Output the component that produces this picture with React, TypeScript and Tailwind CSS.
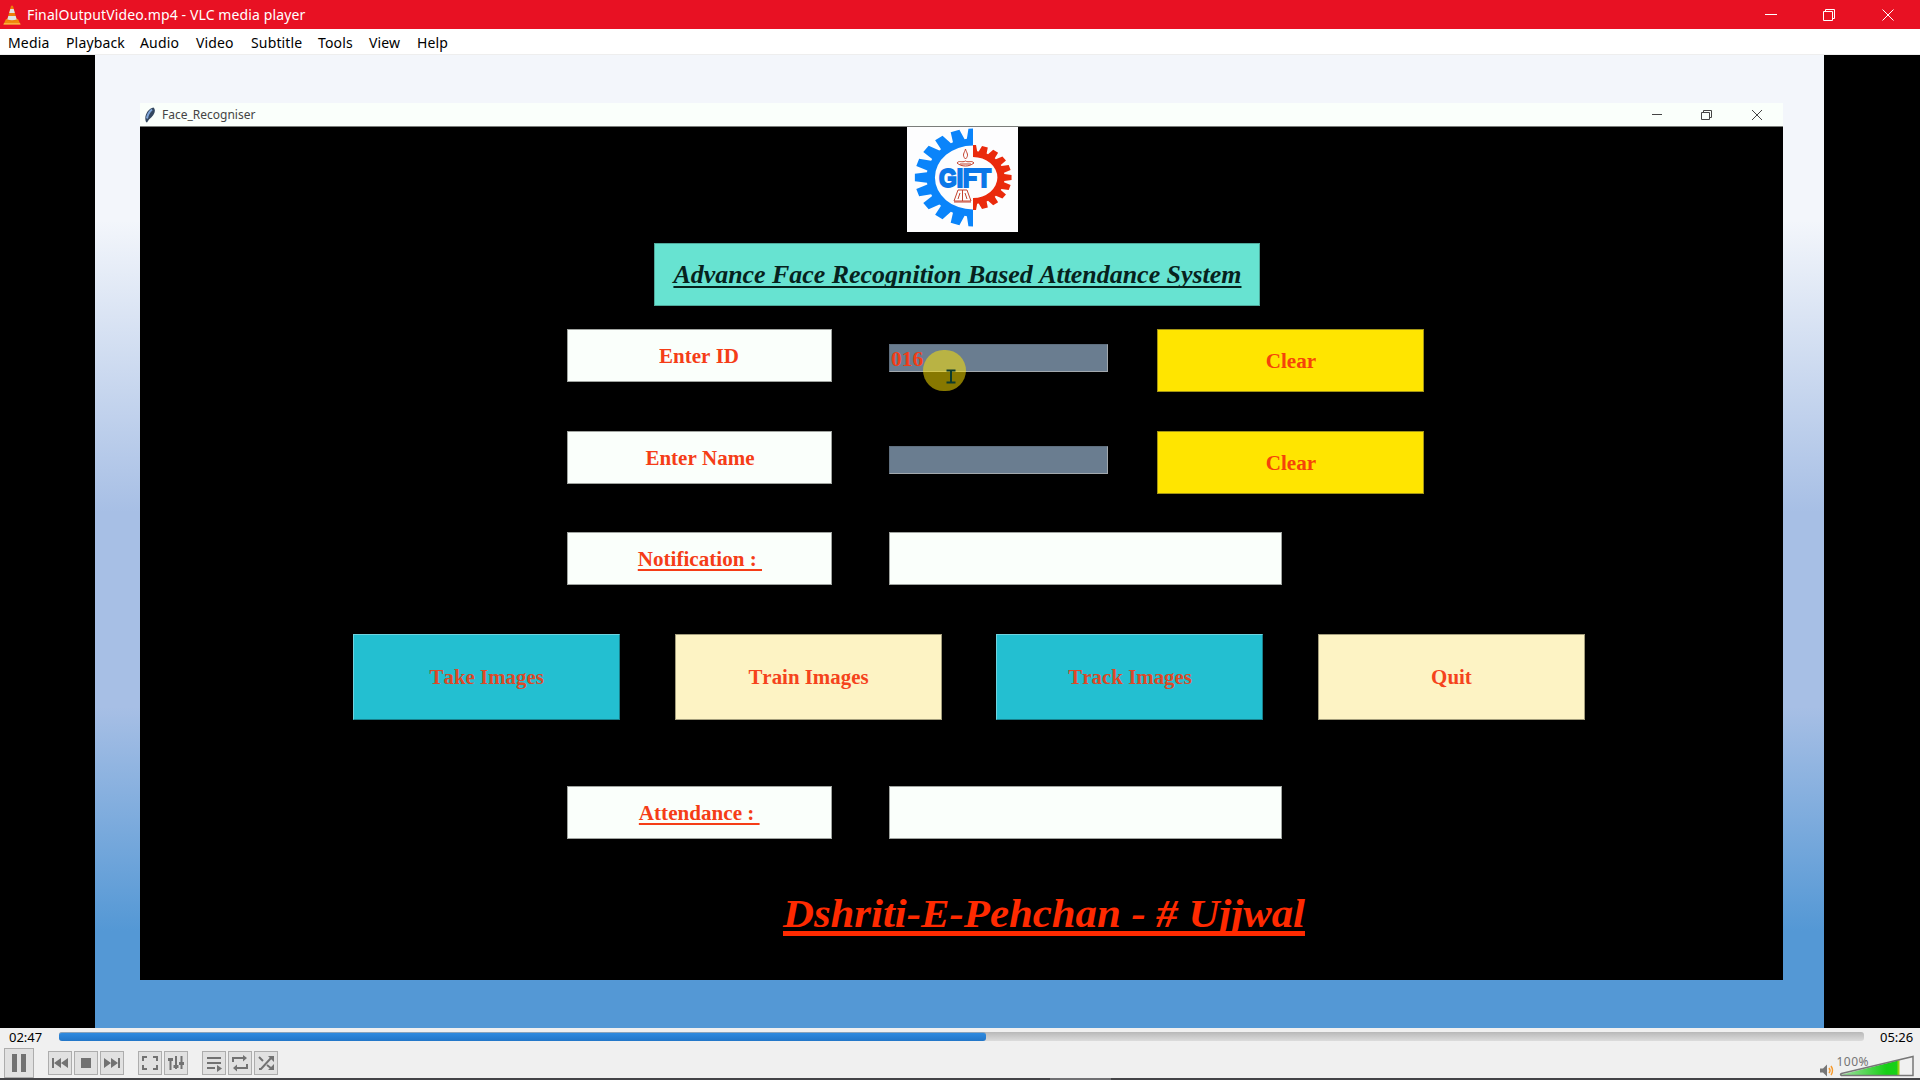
import React from "react";

type GearProps = { cx: number; cy: number; outer: number; root: number; inner: number; side: 1 | -1; teeth: number; color: string };

// Half of a gear ring: side -1 draws the left half, side 1 the right half.
function HalfGear({ cx, cy, outer, root, inner, side, teeth, color }: GearProps) {
  const stretch = 1.19;
  const point = (radius: number, angle: number) =>
    `${(cx + side * stretch * radius * Math.sin(angle)).toFixed(2)},${(cy - radius * Math.cos(angle)).toFixed(2)}`;
  const step = Math.PI / teeth;
  const points: string[] = [];
  for (let i = 0; i <= teeth; i++) {
    const mid = i * step;
    if (i > 0) {
      points.push(point(root, mid - step * 0.42), point(outer, mid - step * 0.25));
    } else {
      points.push(point(outer, 0));
    }
    if (i < teeth) {
      points.push(point(outer, mid + step * 0.25), point(root, mid + step * 0.42));
    } else {
      points.push(point(outer, Math.PI));
    }
  }
  const sweep = side === -1 ? 1 : 0;
  return (
    <path
      fill={color}
      d={`M${points.join("L")}L${cx},${cy + inner}A${inner * stretch},${inner} 0 0 ${sweep} ${cx},${cy - inner}Z`}
    />
  );
}

function GiftLogo() {
  return (
    <svg width="111" height="105" viewBox="0 1 111 105" className="block">
      <rect width="111" height="106" fill="#fdfdfe" />
      <HalfGear cx={66} cy={51.5} outer={49} root={39} inner={32} side={-1} teeth={10} color="#0a84fa" />
      <HalfGear cx={66} cy={51.5} outer={32.5} root={26.5} inner={20.5} side={1} teeth={10} color="#ea2a0c" />
      <g fill="none" stroke="#c4432f" strokeWidth="1">
        <path d="M58.500 33c-4-4-1-6 0-10c1 4 4 6 0 10z" />
        <path d="M50 37c2-3 5 0 8.500-2c3.500 2 6-1 8.500 2c-3 2-5 3-8.500 3s-6-1-8.500-3zM53 38h11" />
        <path d="M51 64h9l4 11h-17zM55.500 64v11M53 67l-2 6M58 67l2 6M47 76h17" />
      </g>
      <text x="32" y="61" textLength="52" lengthAdjust="spacingAndGlyphs" fill="#0b77e8" stroke="#0b77e8" strokeWidth="2" className="font-['Liberation_Sans'] text-[25px] font-bold">GIFT</text>
    </svg>
  );
}

function VlcCone() {
  return (
    <svg width="18" height="20" viewBox="0 0 18 20">
      <path d="M3 14h12l2.500 5.500H.5z" fill="#f08a0c" />
      <path d="M1 18h16l.6 1.500H.4z" fill="#fbb040" />
      <path d="M8 1q1-1 2 0l4 14.500q-5 2-10 0z" fill="#ee7d0b" />
      <path d="M7.300 4h3.400l1.100 4H6.200zM5.300 11h7.400l1 3.500q-4.700 1.600-9.400 0z" fill="#dfe3e6" />
    </svg>
  );
}

function Feather() {
  return (
    <svg width="12" height="16" viewBox="0 0 12 16">
      <path d="M9.500 .5c3 3 1 8-4.500 12l-2 3-1-.5C-.5 9 4 1.500 9.500 .5z" fill="#33475f" />
      <path d="M8 2.500C5 5 3.500 8 3 11.500" stroke="#7fa6d8" strokeWidth="2" fill="none" />
    </svg>
  );
}

const menus: [string, string][] = [
  ["Media", "w-[58px]"],
  ["Playback", "w-[74px]"],
  ["Audio", "w-[56px]"],
  ["Video", "w-[55px]"],
  ["Subtitle", "w-[67px]"],
  ["Tools", "w-[51px]"],
  ["View", "w-[48px]"],
  ["Help", "w-[40px]"],
];

function Label({ children, underline = false }: { children: string; underline?: boolean }) {
  return (
    <div className="flex h-[53px] w-[265px] items-center justify-center border border-[#9fa39f] bg-[#fafffb] text-[#f53d17]">
      <span className={underline ? "scale-x-[1.055] whitespace-pre underline decoration-2 underline-offset-[3px]" : "scale-x-[1.05] whitespace-pre"}>{children}</span>
    </div>
  );
}

function Entry({ children }: { children?: string }) {
  return (
    <div className="mt-[15px] flex h-[28px] w-[219px] items-center border border-t-[#5f6f7f] border-l-[#5f6f7f] border-r-[#a3a9ae] border-b-[#a3a9ae] bg-[#6a7d90] pl-[1px] text-[#f23d17]">
      <span className="mt-px origin-left scale-x-[1.07]">{children}</span>
    </div>
  );
}

function Clear() {
  return (
    <div className="flex h-[63px] w-[267px] items-center justify-center border border-[#a39414] bg-[#ffe500] text-[#f5430a]">
      <span className="mt-px scale-x-[1.055]">Clear</span>
    </div>
  );
}

function Pointer() {
  return (
    <div className="absolute top-[350px] left-[923px] h-[41px] w-[43px] rounded-full bg-[#ffe300]/53">
      <svg width="12" height="15" viewBox="0 0 12 15" className="absolute top-[19px] left-[22px]">
        <path d="M1.500 1.500h4l.5 1 .5-1h4M1.500 13.500h4l.5-1 .5 1h4M6 2v11" fill="none" stroke="#0d3b2c" strokeWidth="2" />
      </svg>
    </div>
  );
}

function Action({ children, teal = false }: { children: string; teal?: boolean }) {
  return (
    <div
      className={
        teal
          ? "flex h-[86px] w-[267px] items-center justify-center border border-t-[#6fd3df] border-l-[#6fd3df] border-r-[#18808c] border-b-[#18808c] bg-[#23bfd1] text-[#dc4a28]"
          : "flex h-[86px] w-[267px] items-center justify-center border border-[#a39d7c] bg-[#fdf3c4] text-[#f5431c]"
      }
    >
      <span className="scale-x-[1.045]">{children}</span>
    </div>
  );
}

function ControlButton({ children, big = false }: { children: React.ReactNode; big?: boolean }) {
  return (
    <div
      className={
        big
          ? "flex h-[30px] w-[30px] shrink-0 items-center justify-center border border-[#adadad] bg-[#e1e1e1] text-[#727272]"
          : "flex h-[24px] w-[24px] shrink-0 items-center justify-center border border-[#adadad] bg-[#e1e1e1] text-[#727272]"
      }
    >
      {children}
    </div>
  );
}

function Icon({ fill, stroke }: { fill?: string; stroke?: string }) {
  return (
    <svg width="18" height="18" viewBox="0 0 18 18">
      {fill && <path d={fill} fill="currentColor" />}
      {stroke && <path d={stroke} fill="none" stroke="currentColor" strokeWidth="2" />}
    </svg>
  );
}

export default function App() {
  return (
    <div className="relative flex h-[1080px] w-[1920px] flex-col overflow-hidden bg-black font-['Noto_Sans',sans-serif]">
      <header className="flex h-[29px] items-center bg-[#e81123] text-white">
        <div className="ml-[3px]"><VlcCone /></div>
        <span className="ml-[6px] text-[14px] tracking-[0.12px]">FinalOutputVideo.mp4 - VLC media player</span>
        <div className="ml-auto flex items-center pr-[25px]">
          <svg width="130" height="14" viewBox="0 0 130 14" fill="none" stroke="white">
            <path d="M0 6.500h12M58.500 3.500h9v9h-9zM60.500 3.500v-2h9v9h-2M117.500 1.500l11 11M128.500 1.500l-11 11" />
          </svg>
        </div>
      </header>

      <nav className="flex h-[26px] items-center border-b border-[#eeeeee] bg-white pt-[2px] pl-[8px] text-[14px] tracking-[0.15px] text-black">
        {menus.map(([name, width]) => (
          <span key={name} className={width}>{name}</span>
        ))}
      </nav>

      <main className="mx-[95px] h-[973px] w-[1729px] bg-[linear-gradient(180deg,#f3f6fb_0%,#f3f6fb_17%,#a7bfe5_47%,#a7bfe5_67%,#5498d5_90%,#5498d5_100%)] pt-[48px] pl-[45px]">
        <div className="flex h-[877px] w-[1643px] flex-col bg-black">
          <div className="flex h-[24px] items-center border-b border-[#7a7d7a] bg-[#fafffb] pl-[4px] text-[#444]">
            <Feather />
            <span className="mt-px ml-[6px] text-[12px]">Face_Recogniser</span>
            <svg width="112" height="12" viewBox="0 0 112 12" fill="none" stroke="#444" className="mr-[20px] ml-auto">
              <path d="M1 5.500h10M50.500 3.500h8v7h-8zM52.500 3.500v-2h8v7h-2M101 1l10 10M111 1l-10 10" />
            </svg>
          </div>

          <div className="ml-[767px] h-[105px] w-[111px]"><GiftLogo /></div>

          <h1 className="mt-[11px] ml-[514px] flex h-[63px] w-[606px] items-center justify-center border border-[#4fa99b] bg-[#67e3d1] font-['Liberation_Serif',serif] text-[24.5px] font-bold text-[#06221d] italic [font-kerning:none]">
            <span className="mt-[2px] scale-x-[1.058] whitespace-nowrap underline decoration-2 underline-offset-[3px] [text-decoration-skip-ink:none]">Advance Face Recognition Based Attendance System</span>
          </h1>

          <div className="mt-[23px] ml-[427px] grid grid-cols-[322px_268px_267px] grid-rows-[102px_101px_102px] items-start font-['Liberation_Serif',serif] text-[20px] font-bold [font-kerning:none] [text-decoration-skip-ink:none]">
            <Label>Enter ID</Label>
            <Entry>016</Entry>
            <Clear />
            <Label>Enter Name</Label>
            <Entry />
            <Clear />
            <Label underline>{"Notification : "}</Label>
            <div className="h-[53px] w-[393px] border border-[#9fa39f] bg-[#fafffb]" />
          </div>

          <div className="ml-[213px] flex gap-[54.600px] font-['Liberation_Serif',serif] text-[20px] font-bold [font-kerning:none]">
            <Action teal>Take Images</Action>
            <Action>Train Images</Action>
            <Action teal>Track Images</Action>
            <Action>Quit</Action>
          </div>

          <div className="mt-[66px] ml-[427px] flex gap-[57px] font-['Liberation_Serif',serif] text-[20px] font-bold [font-kerning:none] [text-decoration-skip-ink:none]">
            <Label underline>{"Attendance : "}</Label>
            <div className="h-[53px] w-[393px] border border-[#9fa39f] bg-[#fafffb]" />
          </div>

          <p className="mt-[47px] ml-[643px] font-['Liberation_Serif',serif] text-[40px] leading-[56px] font-bold text-[#ff2a00] italic [font-kerning:none]">
            <span className="inline-block origin-left scale-x-[1.07] underline decoration-[5px] underline-offset-[4px] [text-decoration-skip-ink:none]">Dshriti-E-Pehchan - # Ujjwal</span>
          </p>
        </div>
      </main>

      <footer className="flex h-[50px] flex-col bg-[#f0f0f0]">
        <div className="flex h-[20px] items-center text-[13px] text-black">
          <span className="w-[59px] pl-[9px]">02:47</span>
          <div className="-mt-[3px] h-[9px] w-[1805px] rounded-[3px] bg-linear-to-b from-[#b8b8b8] to-[#dcdcdc]">
            <div className="h-full w-[927px] rounded-[3px] border-t border-[#8aa3bb] bg-linear-to-b from-[#2f8be0] to-[#2376c8]" />
          </div>
          <span className="ml-[16px]">05:26</span>
        </div>
        <div className="flex h-[30px] items-center pl-[4px]">
          <ControlButton big><svg width="18" height="18" viewBox="0 0 18 18"><path d="M2 0h5v18h-5zM11 0h5v18h-5z" fill="currentColor" /></svg></ControlButton>
          <div className="ml-[14px] flex gap-[2px]">
            <ControlButton><Icon fill="M1 4h2v10H1zM10 4v10L3 9zM17 4v10l-7-5z" /></ControlButton>
            <ControlButton><Icon fill="M4 4h10v10H4z" /></ControlButton>
            <ControlButton><Icon fill="M15 4h2v10h-2zM1 4v10l7-5zM8 4v10l7-5z" /></ControlButton>
          </div>
          <div className="ml-[14px] flex gap-[2px]">
            <ControlButton><Icon stroke="M2 7V3h4M12 3h4v4M16 11v4h-4M6 15H2v-4" /></ControlButton>
            <ControlButton><Icon stroke="M3.500 4v12M9 2v13M14.500 2v13" fill="M1 4h5v3H1zM6.500 11h5v3h-5zM12 8h5v3h-5z" /></ControlButton>
          </div>
          <div className="ml-[14px] flex gap-[2px]">
            <ControlButton><Icon stroke="M2 4h14M2 9h14M2 14h8" fill="M12 11l5 3.500-5 3.500z" /></ControlButton>
            <ControlButton><Icon stroke="M2 8V4h11M16 10v4H5" fill="M12 1l4 3-4 3.500zM6 10.500v7L2 14z" /></ControlButton>
            <ControlButton><Icon stroke="M2 15h2L14 4M2 3l4 4M10 11l5 4" fill="M11 2h6v6zM17 10v6h-6z" /></ControlButton>
          </div>
          <svg width="100" height="28" viewBox="0 0 100 28" className="mr-[3px] ml-auto">
            <defs>
              <linearGradient id="volume"><stop stopColor="#a6dfa6" /><stop offset=".8" stopColor="#16cf16" /><stop offset="1" stopColor="#18d018" /></linearGradient>
            </defs>
            <path d="M3 19.500h3l4-4v12l-4-4H3z" fill="#777" />
            <path d="M12 19q2 2.500 0 5M14 17q3 4.500 0 9" fill="none" stroke="#f79a2c" strokeWidth="1.500" />
            <path d="M23 26L81 11.500V26z" fill="url(#volume)" />
            <path d="M80.500 11.500l2-.5V26h-2z" fill="#8fd412" />
            <path d="M24.500 24.500L96 7.500V26.500H24.500q-2-1 0-2z" fill="none" stroke="#777" strokeWidth="1.500" />
            <text x="19.500" y="17" fill="#747474" textLength="32" className="text-[12px]">100%</text>
          </svg>
        </div>
      </footer>
      <div className="h-[2px] bg-[#444447] pl-[1050px]"><div className="h-full w-[61px] bg-[#707073]" /></div>

      <Pointer />
    </div>
  );
}
